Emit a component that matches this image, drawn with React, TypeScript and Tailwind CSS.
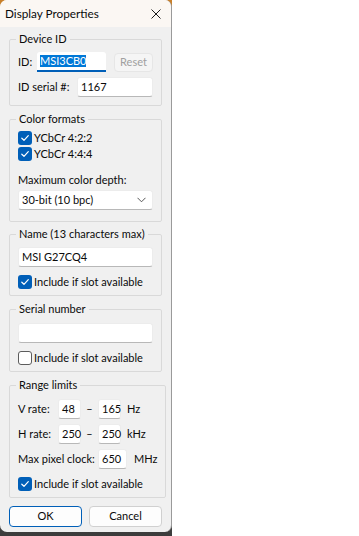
import type { ReactNode } from 'react'

const font = { fontFamily: 'Lato, "Noto Sans", Arial, sans-serif' }

function Check({ checked, label }: { checked: boolean; label: string }) {
  return (
    <div className="flex items-center h-[16px]">
      {checked ? (
        <span className="w-[14px] h-[14px] shrink-0 rounded-[3px] bg-[#005fb8] flex items-center justify-center">
          <svg width="10" height="10" viewBox="0 0 10 10" fill="none">
            <path d="M1.8 5.2 L4 7.3 L8.3 2.7" stroke="#fff" strokeWidth="1.2" strokeLinecap="round" strokeLinejoin="round" />
          </svg>
        </span>
      ) : (
        <span className="w-[14px] h-[14px] shrink-0 rounded-[3px] bg-white border border-[#5c5c5c]" />
      )}
      <span className="ml-[2px] whitespace-nowrap">{label}</span>
    </div>
  )
}

function Field({ value, className = '' }: { value?: string; className?: string }) {
  return (
    <div className={`h-[20px] shrink-0 bg-white border border-[#ececec] border-b-[#b8b8b8] rounded-[3px] px-[3px] flex items-center ${className}`}>
      {value}
    </div>
  )
}

function Group({ title, className = '', children }: { title: string; className?: string; children: ReactNode }) {
  return (
    <fieldset className={`border border-[#d9d9d9] rounded-[2px] px-[8px] ${className}`}>
      <legend className="-ml-[2px] px-[3px] leading-[16px] whitespace-nowrap">{title}</legend>
      {children}
    </fieldset>
  )
}

export default function App() {
  return (
    <div className="w-[359px] h-[536px] bg-white text-[11px] text-[#0a0a0a]" style={font}>
      <div className="w-[172px] h-[536px] bg-linear-to-b from-[#c9802a] via-[#8a7a66] to-[#3c3c3c]">
        <div className="w-[172px] h-[532px] rounded-[7px] overflow-hidden bg-[#f0f0f0] border-r border-[#9a9a9a] flex flex-col">
          {/* title bar */}
          <div className="h-[27px] shrink-0 bg-[#fbf7f3] flex items-center justify-between pl-[5px] pr-[10px]">
            <span className="text-[11.75px]">Display Properties</span>
            <svg width="10" height="10" viewBox="0 0 10 10">
              <path d="M0.5 0.5 L9.5 9.5 M9.5 0.5 L0.5 9.5" stroke="#1a1a1a" strokeWidth="1" />
            </svg>
          </div>

          <div className="pl-[9px] pr-[9px] flex flex-col">
            <Group title="Device ID" className="mt-[4px] pt-[5px] pb-[8px]">
              <div className="flex items-center h-[20px]">
                <span className="w-[19px]">ID:</span>
                <div className="w-[69px] h-[20px] bg-white border-b-2 border-[#005fb8] rounded-t-[3px] pl-[3px] flex items-center">
                  <span className="bg-[#0078d7] text-white leading-[12px]">MSI3CB0</span>
                </div>
                <div className="ml-[8px] w-[39px] h-[19px] rounded-[4px] bg-[#f5f5f5] border border-[#e6e6e6] text-[#a0a0a0] flex items-center justify-center">
                  Reset
                </div>
              </div>
              <div className="flex items-center mt-[5px]">
                <span className="w-[59px]">ID serial #:</span>
                <Field value="1167" className="w-[76px]" />
              </div>
            </Group>

            <Group title="Color formats" className="mt-[5px] pt-[3px] pb-[11px]">
              <Check checked label="YCbCr 4:2:2" />
              <Check checked label="YCbCr 4:4:4" />
              <div className="mt-[10px] leading-[16px]">Maximum color depth:</div>
              <div className="mt-[2px] w-[135px] h-[20px] bg-white border border-[#ececec] border-b-[#b8b8b8] rounded-[3px] px-[3px] flex items-center justify-between">
                <span>30-bit (10 bpc)</span>
                <svg width="9" height="6" viewBox="0 0 9 6" className="mr-[3px]">
                  <path d="M0.5 0.8 L4.5 4.8 L8.5 0.8" stroke="#444" strokeWidth="0.9" fill="none" />
                </svg>
              </div>
            </Group>

            <Group title="Name (13 characters max)" className="mt-[4px] pt-[5px] pb-[5px]">
              <Field value="MSI G27CQ4" className="w-[135px]" />
              <div className="mt-[7px]">
                <Check checked label="Include if slot available" />
              </div>
            </Group>

            <Group title="Serial number" className="mt-[5px] pt-[6px] pb-[5px]">
              <Field className="w-[135px]" />
              <div className="mt-[7px]">
                <Check checked={false} label="Include if slot available" />
              </div>
            </Group>

            <Group title="Range limits" className="mt-[5px] pt-[6px] pb-[5px]">
              <div className="flex items-center">
                <span className="w-[40px] whitespace-nowrap">V rate:</span>
                <Field value="48" className="w-[23px]" />
                <span className="w-[17px] text-center">–</span>
                <Field value="165" className="w-[23px]" />
                <span className="ml-[6px]">Hz</span>
              </div>
              <div className="flex items-center mt-[5px]">
                <span className="w-[40px] whitespace-nowrap">H rate:</span>
                <Field value="250" className="w-[23px]" />
                <span className="w-[17px] text-center">–</span>
                <Field value="250" className="w-[23px]" />
                <span className="ml-[6px]">kHz</span>
              </div>
              <div className="flex items-center mt-[5px]">
                <span className="w-[80px] whitespace-nowrap">Max pixel clock:</span>
                <Field value="650" className="w-[29px]" />
                <span className="ml-[7px]">MHz</span>
              </div>
              <div className="mt-[7px]">
                <Check checked label="Include if slot available" />
              </div>
            </Group>

            <div className="mt-[8px] flex justify-between">
              <div className="w-[73px] h-[21px] rounded-[4px] bg-[#fdfdfd] border-[1.5px] border-[#005fb8] flex items-center justify-center">
                OK
              </div>
              <div className="w-[73px] h-[21px] rounded-[4px] bg-[#fdfdfd] border border-[#d0d0d0] flex items-center justify-center">
                Cancel
              </div>
            </div>
          </div>
        </div>
      </div>
    </div>
  )
}
